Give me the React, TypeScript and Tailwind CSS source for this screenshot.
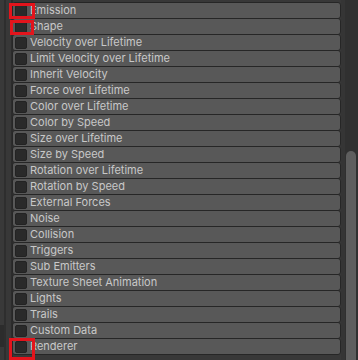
const modules = [
  "Emission",
  "Shape",
  "Velocity over Lifetime",
  "Limit Velocity over Lifetime",
  "Inherit Velocity",
  "Force over Lifetime",
  "Color over Lifetime",
  "Color by Speed",
  "Size over Lifetime",
  "Size by Speed",
  "Rotation over Lifetime",
  "Rotation by Speed",
  "External Forces",
  "Noise",
  "Collision",
  "Triggers",
  "Sub Emitters",
  "Texture Sheet Animation",
  "Lights",
  "Trails",
  "Custom Data",
  "Renderer",
];

function ModuleRow({ label, first }: { label: string; first: boolean }) {
  return (
    <div
      className={`flex items-center h-[17px] bg-[#585858] border border-[#262626] rounded-[3px] ${
        first ? "" : "-mt-px"
      }`}
    >
      <span className="ml-[2px] w-[12px] h-[12px] rounded-[2px] bg-[#2a2a2a] border border-[#232323] shrink-0" />
      <span className="ml-[3px] text-[11px] leading-none text-[#c8c8c8] whitespace-nowrap">
        {label}
      </span>
    </div>
  );
}

export default function App() {
  return (
    <div
      className="relative w-[358px] h-[360px] overflow-hidden bg-[#383838] flex"
      style={{ fontFamily: "Inter, 'Noto Sans', sans-serif" }}
    >
      {/* --- left gutter --- */}
      <div className="flex h-full w-[13px] shrink-0">
        <div className="w-[4px] bg-[#393939] flex flex-col">
          <div className="h-[325px]" />
          <div className="h-[22px] bg-[#2c2c2c]" />
        </div>
        <div className="w-[2px] bg-[#2e2e2e]" />
        <div className="w-[5px] bg-[#383838]" />
        <div className="w-[2px] bg-[#2c2c2c]" />
      </div>

      {/* --- module list --- */}
      <div className="w-[329px] shrink-0 pt-[2px] -ml-px">
        {modules.map((m, i) => (
          <ModuleRow key={m} label={m} first={i === 0} />
        ))}
      </div>

      {/* --- right border + scrollbar --- */}
      <div className="w-[4px] shrink-0 bg-[#353535]" />
      <div className="flex-1 bg-[#303030] pt-[151px] px-[1px]">
        <div className="w-[10px] h-[260px] rounded-t-full bg-[#5e5e5e]" />
      </div>

      {/* --- highlight boxes --- */}
      <div className="absolute left-[9px] top-[3px] w-[26px] h-[16px] border-[3px] border-[#e3141c]" />
      <div className="absolute left-[10px] top-[20px] w-[24px] h-[15px] border-[3px] border-[#e3141c]" />
      <div className="absolute left-[9px] top-[338px] w-[26px] h-[22px] border-[3px] border-[#e3141c]" />
    </div>
  );
}
